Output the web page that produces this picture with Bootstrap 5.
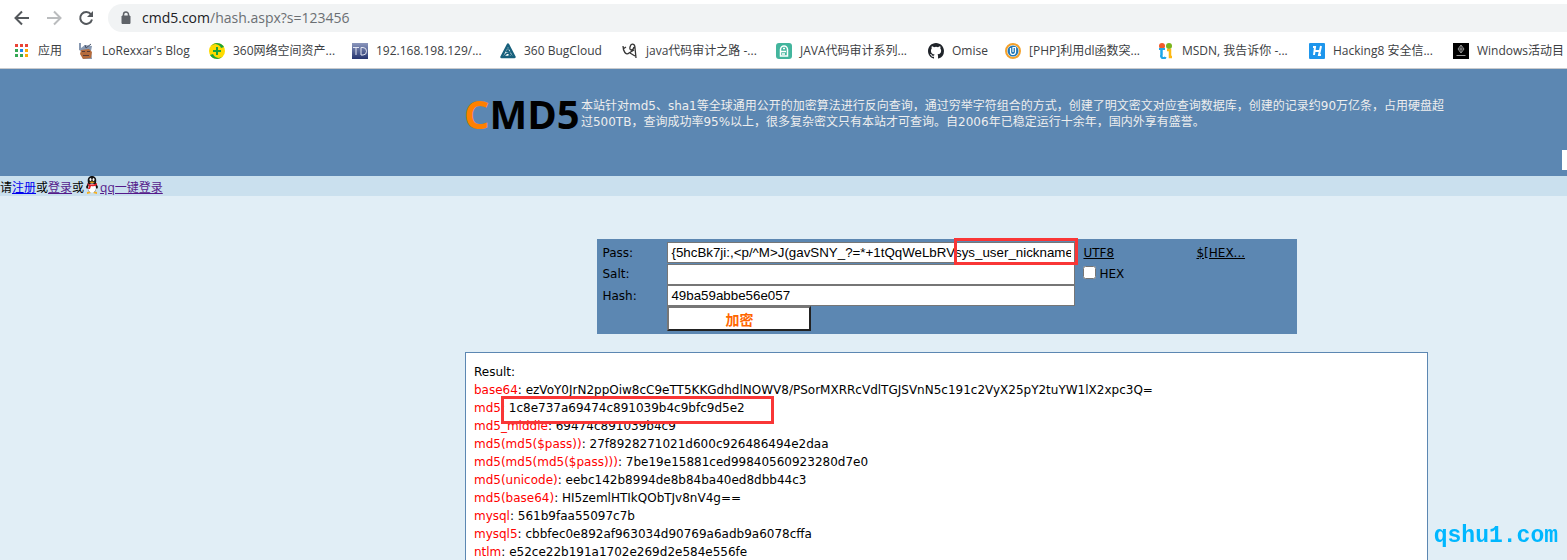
<!DOCTYPE html>
<html lang="zh-CN">
<head>
<meta charset="utf-8">
<meta name="viewport" content="width=device-width, initial-scale=1">
<title>CMD5</title>
<link href="https://cdn.jsdelivr.net/npm/bootstrap@5.3.0/dist/css/bootstrap.min.css" rel="stylesheet">
<script src="https://cdn.jsdelivr.net/npm/bootstrap@5.3.0/dist/js/bootstrap.bundle.min.js"></script>
<style>
  body { font: 12px/18px "DejaVu Sans", "Noto Sans CJK SC", sans-serif; color: #000; background: #e1eef6; overflow: hidden; }
  .browser { font-family: "Open Sans", "Noto Sans CJK SC", sans-serif; background: #fff; border-bottom: 1px solid #c8cacd; }
  .toolbar { height: 35px; padding-left: 14px; }
  .toolbar button { width: 16px; height: 16px; margin-right: 16px; }
  .omnibox { height: 28px; background: #f1f3f4; border-radius: 14px 0 0 14px; padding-left: 10px; margin-left: -2px; }
  .omnibox .host { color: #202124; font-size: 14px; }
  .omnibox .path { color: #6b6f73; font-size: 14px; }
  .bookmarks { height: 33px; padding-left: 14px; display: grid; overflow: hidden; padding-bottom: 2px;
    grid-template-columns: 64px 131px 143px 148px 122px 154px 152px 77px 153px 151px 144px 1fr; }
  .bookmarks a { color: #3c4043; white-space: nowrap; }
  .bookmarks svg { width: 16px; height: 16px; flex: none; }
  .site { width: 120.8vw; }
  .masthead { height: 107px; background: #5c87b2; color: #eee; padding-top: 25px; }
  .centre { width: 963px; }
  .logo { font: bold 40px/40px "Open Sans", sans-serif; color: #000; width: 116px; flex: none; margin-left: -1px; }
  .logo span { color: #ff8000; }
  .intro { line-height: 16px; width: 868px; flex: none; padding: 4px 0 0 1px; }
  .menu { width: 331px; height: 20px; background: #fff; top: 81px; right: 0; }
  .login { height: 20px; background: #cae0ee; line-height: 22px; font-family: "Open Sans", "Noto Sans CJK SC", sans-serif; }
  .login a { color: #551a8b; }
  .login a.fresh { color: #00e; }
  .login svg { width: 14px; height: 18px; margin: 0 1px 8px; }
  .hasher { width: 700px; margin-top: 43px; background: #5c87b2; padding: 3px 5px; display: grid; align-items: center; position: relative; left: 1px;
    grid-template-columns: 65px 408px 121px 1fr; grid-template-rows: 21px 22px 21px 25px; }
  .hasher a { color: #000; }
  .hasher input[type=text] { font-family: "Liberation Sans", sans-serif; font-size: revert; height: 21px; border: 1px solid #767676; padding: 1px 3px; width: 100%; border-radius: 0; background: #fff; color: #000; outline: 0; }
  .hasher input[type=checkbox] { width: 13px; height: 13px; margin: 0 3px 4px 0; vertical-align: middle; }
  .hasher button { width: 144px; height: 25px; padding: 0; background: #fff; border: 2px solid; border-color: #767676 #222 #222 #767676; color: #f60; font: bold 14px/18px "Noto Sans CJK SC", sans-serif; }
  .results { margin-top: 18px; background: #fff; border: 1px solid #5c87b2; padding: 10px 8px 40px; }
  .results b { font-weight: normal; color: red; }
  .outline { position: absolute; border: 3px solid #f93636; pointer-events: none; }
  .outline-pass { width: 124px; height: 27px; right: -3px; top: -4px; }
  .outline-md5 { width: 273px; height: 28px; left: 27px; top: -3px; }
  .stamp { position: fixed; right: 9px; bottom: 10px; color: #00b7ff; font: bold 23px/28px "Noto Serif Mono", "Liberation Mono", monospace; }
</style>
</head>
<body>
<header class="browser">
  <div class="toolbar d-flex align-items-center">
    <button class="btn p-0 border-0 d-flex" aria-label="Back"><svg width="16" height="16" fill="none" stroke="#54585c" stroke-width="2"><path d="M15 8H2M8 1.5 1.5 8 8 14.500"/></svg></button>
    <button class="btn p-0 border-0 d-flex" aria-label="Forward"><svg width="16" height="16" fill="none" stroke="#babcbe" stroke-width="2"><path d="M1 8h13M8 1.500 14.500 8 8 14.500"/></svg></button>
    <button class="btn p-0 border-0 d-flex" aria-label="Reload"><svg width="16" height="16" fill="none" stroke="#54585c" stroke-width="2"><path d="M13 4.300A6 6 0 1 0 14 9.500"/><path d="M15 1v6H9z" fill="#54585c" stroke="none"/></svg></button>
    <div class="omnibox d-flex align-items-center flex-grow-1">
      <svg class="me-2" width="16" height="16"><path d="M4 6h8v7.500H4z" fill="#5f6368" stroke="#5f6368" stroke-linejoin="round"/><path d="M5.500 6V4.500a2.500 2.500 0 0 1 5 0V6" fill="none" stroke="#5f6368" stroke-width="1.500"/></svg>
      <span class="host">cmd5.com</span><span class="path">/hash.aspx?s=123456</span>
    </div>
  </div>
  <nav class="bookmarks align-items-center">
    <a href="#" class="d-flex align-items-center gap-2 text-decoration-none"><svg viewBox="0 0 16 16"><path fill="#ea4335" d="M1 1h3v3H1zM6 1h3v3H6zM11 1h3v3h-3z"/><path fill="#34a853" d="M1 6h3v3H1zM1 11h3v3H1z"/><path fill="#1a88f0" d="M6 6h3v3H6z"/><path fill="#34a853" d="M6 11h3v3H6z"/><path fill="#fbab05" d="M11 6h3v3h-3zM11 11h3v3h-3z"/></svg>应用</a>
    <a href="#" class="d-flex align-items-center gap-2 text-decoration-none"><svg viewBox="0 0 16 16"><path fill="#8798b1" d="M1 0h2v5l4-3 7 1-1 5 1 8H5L3 8 1 7z"/><path fill="#b56b3b" d="M3 7l8-1 3 3-1 6-8 1-3-5z"/><path fill="#573a35" d="M4 8h3v1H4zM9 8h3v1H9zM5 12h6v1H5z"/><path stroke="#4a5369" d="m7 2 1 3 5-4" fill="none"/></svg>LoRexxar's Blog</a>
    <a href="#" class="d-flex align-items-center gap-2 text-decoration-none"><svg viewBox="0 0 16 16"><circle cx="8" cy="8" r="8" fill="#fedb00"/><path fill="#1aa33a" d="M2 3a8 8 0 0 1 13 1l-3 1a6 6 0 0 0-10-2zM1 12l3-1a6 6 0 0 0 10 2 8 8 0 0 1-13-1zM7 4h2v3h3v2H9v3H7V9H4V7h3z"/></svg>360网络空间资产...</a>
    <a href="#" class="d-flex align-items-center gap-2 text-decoration-none"><svg viewBox="0 0 16 16"><defs><linearGradient id="td" x2="0" y2="1"><stop stop-color="#8b97bd"/><stop offset="1" stop-color="#25346f"/></linearGradient></defs><path fill="url(#td)" d="M0 0h16v16H0z"/><path d="M1 4.500h6M4 4.500V12M9 4.500V12h2a3.500 3.700 0 0 0 0-7.500z" fill="none" stroke="#e3e6f2"/></svg>192.168.198.129/...</a>
    <a href="#" class="d-flex align-items-center gap-2 text-decoration-none"><svg viewBox="0 0 16 16"><path d="M8 1.500 14.500 14H1.500z" fill="#fff" stroke="#17607c" stroke-width="2.500" stroke-linejoin="round"/><path d="M8 5v4M4 13l4-4 4 4M6 8l4 1-1 4" fill="none" stroke="#17607c" stroke-width="1.500"/></svg>360 BugCloud</a>
    <a href="#" class="d-flex align-items-center gap-2 text-decoration-none"><svg viewBox="0 0 16 16"><path d="M1 3C1 8 4 13 7 10L12 7M12 4c-1 4-5 4-4 0s5-4 5 1l1 10M8 10l5 3M1 6l3-2" fill="none" stroke="#353535" stroke-width="1.300"/></svg>java代码审计之路 -...</a>
    <a href="#" class="d-flex align-items-center gap-2 text-decoration-none"><svg viewBox="0 0 16 16"><rect width="16" height="16" rx="3" fill="#43b59d"/><path d="M4.500 13V6.500a3.500 3.500 0 0 1 7 0V13zM5 8.500h5M7 5.500h2M6 11h3" fill="none" stroke="#fff" stroke-width="1.500"/></svg>JAVA代码审计系列...</a>
    <a href="#" class="d-flex align-items-center gap-2 text-decoration-none"><svg viewBox="0 0 16 16"><path fill="#20242a" d="M8 0C3.580 0 0 3.580 0 8c0 3.540 2.290 6.530 5.470 7.590.4.070.55-.17.55-.38v-1.490c-2.010.37-2.530-.49-2.690-.94-.09-.23-.48-.94-.82-1.130-.28-.15-.68-.52-.01-.53.63-.01 1.080.58 1.230.82.72 1.210 1.870.87 2.330.66.07-.52.28-.87.51-1.070-1.780-.2-3.640-.89-3.640-3.950 0-.87.31-1.590.82-2.150-.08-.2-.36-1.020.08-2.120 0 0 .67-.21 2.200.82a7.700 7.700 0 0 1 4 0c1.530-1.040 2.200-.82 2.200-.82.44 1.100.16 1.920.08 2.120.51.56.82 1.270.82 2.150 0 3.070-1.870 3.750-3.650 3.950.29.25.54.73.54 1.480v2.200c0 .21.15.46.55.38A8 8 0 0 0 16 8c0-4.420-3.580-8-8-8z"/></svg>Omise</a>
    <a href="#" class="d-flex align-items-center gap-2 text-decoration-none"><svg viewBox="0 0 16 16"><circle cx="8" cy="8" r="7" fill="#fff" stroke="#f4a12b" stroke-width="2"/><circle cx="8" cy="8" r="5.500" fill="#2478b5"/><path d="M5.500 5v4a2.500 2.500 0 0 0 5 0V4.500H8V9" fill="none" stroke="#fff" stroke-width="1.200"/></svg>[PHP]利用dl函数突...</a>
    <a href="#" class="d-flex align-items-center gap-2 text-decoration-none"><svg viewBox="0 0 16 16"><circle cx="4" cy="3" r="3" fill="#f15a2b"/><circle cx="11" cy="3" r="3" fill="#7ab51d"/><path d="M3.500 6v6a2 2 0 0 0 4 2" fill="none" stroke="#1fa7e8" stroke-width="2.500"/><path d="M1 6h6" stroke="#1fa7e8" stroke-width="2"/><path d="M9 7h3v7h2" fill="none" stroke="#fdb813" stroke-width="2.500"/></svg>MSDN, 我告诉你 -...</a>
    <a href="#" class="d-flex align-items-center gap-2 text-decoration-none"><svg viewBox="0 0 16 16"><rect width="16" height="16" rx="1" fill="#1e96ec"/><path d="M4 4h2L5 12M12 3l-2 9h2M5 8h6" fill="none" stroke="#fff" stroke-width="2"/></svg>Hacking8 安全信...</a>
    <a href="#" class="d-flex align-items-center gap-2 text-decoration-none"><svg viewBox="0 0 16 16"><path d="M0 0h16v16H0z"/><path d="m8 2 3 4-3 4-3-4zM8 3v6M6 6h4M3.500 12.500h9" fill="none" stroke="#999"/></svg>Windows活动目</a>
  </nav>
</header>

<div class="site">
  <header class="masthead position-relative">
    <div class="centre mx-auto d-flex">
      <div class="logo"><span>C</span>MD5</div>
      <div class="intro">本站针对md5、sha1等全球通用公开的加密算法进行反向查询，通过穷举字符组合的方式，创建了明文密文对应查询数据库，创建的记录约90万亿条，占用硬盘超过500TB，查询成功率95%以上，很多复杂密文只有本站才可查询。自2006年已稳定运行十余年，国内外享有盛誉。</div>
    </div>
    <div class="menu position-absolute"></div>
  </header>
  <div class="login">请<a class="fresh" href="#">注册</a>或<a href="#">登录</a>或<svg viewBox="0 0 14 18"><path d="M3 7C2 2 4 0 7 0s5 2 4 7l2 4-1 2-1-1-1 4H4l-1-4-1 1-1-2z" fill="#111"/><ellipse cx="7" cy="12" rx="4" ry="4.500" fill="#fff"/><path d="M2 7q5 3 10 0v2q-3 2-6 1l-1 3H3l1-3z" fill="#e3222b"/><ellipse cx="5.500" cy="3.500" rx="1" ry="1.500" fill="#fff"/><ellipse cx="8.500" cy="3.500" rx="1" ry="1.500" fill="#fff"/><path d="M4 6q3-1 6 0-3 2-6 0M2 16q2-1 4 1l-4 1zM12 16q-2-1-4 1l4 1z" fill="#f8b21c"/></svg><a href="#">qq一键登录</a></div>

  <main class="centre mx-auto">
    <form class="hasher mx-auto">
      <label for="pass">Pass:</label>
      <div class="position-relative"><input class="d-block" type="text" id="pass" value="{5hcBk7ji:,&lt;p/^M&gt;J(gavSNY_?=*+1tQqWeLbRVsys_user_nickname"><div class="outline outline-pass"></div></div>
      <a class="ps-2" href="#">UTF8</a><a href="#">$[HEX...</a>
      <label for="salt">Salt:</label><input type="text" id="salt">
      <div class="ps-2"><input type="checkbox" id="hex"><label for="hex">HEX</label></div><span></span>
      <label for="hash">Hash:</label><input type="text" id="hash" value="49ba59abbe56e057"><span></span><span></span>
      <span></span><button type="button">加密</button>
    </form>
    <section class="results">
      <div>Result:</div>
      <div><b>base64</b>: ezVoY0JrN2ppOiw8cC9eTT5KKGdhdlNOWV8/PSorMXRRcVdlTGJSVnN5c191c2VyX25pY2tuYW1lX2xpc3Q=</div>
      <div class="position-relative"><b>md5</b>: 1c8e737a69474c891039b4c9bfc9d5e2<div class="outline outline-md5"></div></div>
      <div><b>md5_middle</b>: 69474c891039b4c9</div>
      <div><b>md5(md5($pass))</b>: 27f8928271021d600c926486494e2daa</div>
      <div><b>md5(md5(md5($pass)))</b>: 7be19e15881ced99840560923280d7e0</div>
      <div><b>md5(unicode)</b>: eebc142b8994de8b84ba40ed8dbb44c3</div>
      <div><b>md5(base64)</b>: HI5zemlHTIkQObTJv8nV4g==</div>
      <div><b>mysql</b>: 561b9faa55097c7b</div>
      <div><b>mysql5</b>: cbbfec0e892af963034d90769a6adb9a6078cffa</div>
      <div><b>ntlm</b>: e52ce22b191a1702e269d2e584e556fe</div>
    </section>
  </main>
</div>
<div class="stamp">qshu1.com</div>
</body>
</html>
